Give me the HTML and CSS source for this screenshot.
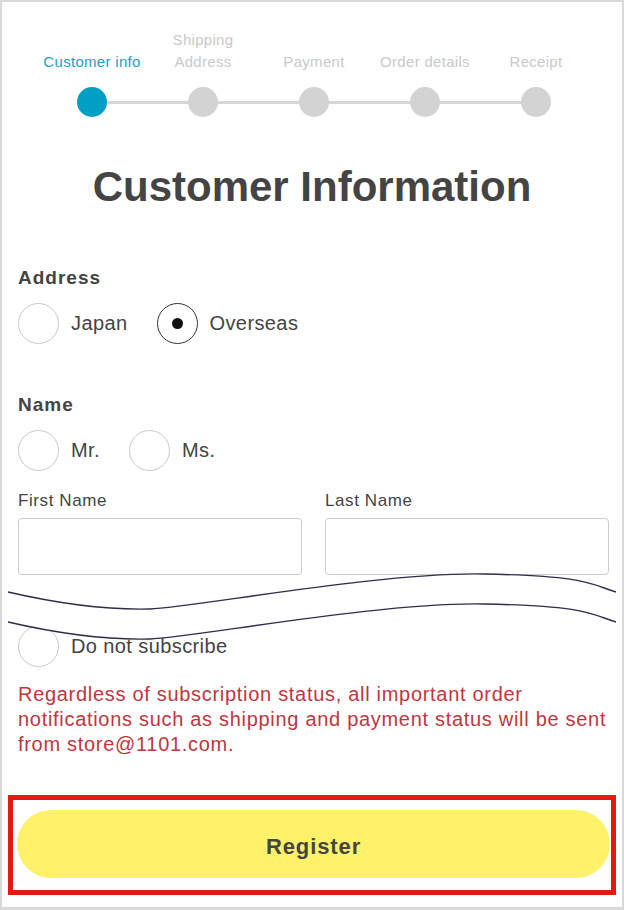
FILE: index.html
```html
<!DOCTYPE html>
<html lang="en">
<head>
<meta charset="utf-8">
<title>Customer Information</title>
<link rel="stylesheet" href="styles.css">
</head>
<body>
<div class="frame">
  <div class="stepper">
    <div class="step-labels">
      <span class="step-label active">Customer info</span>
      <span class="step-label">Shipping<br>Address</span>
      <span class="step-label">Payment</span>
      <span class="step-label">Order details</span>
      <span class="step-label">Receipt</span>
    </div>
    <div class="step-track">
      <span class="dot active"></span>
      <span class="dot"></span>
      <span class="dot"></span>
      <span class="dot"></span>
      <span class="dot"></span>
    </div>
  </div>

  <h1 class="title">Customer Information</h1>

  <div class="form">
    <div class="field-label">Address</div>
    <div class="radio-row">
      <label class="radio-item"><span class="radio"></span><span class="radio-text">Japan</span></label>
      <label class="radio-item"><span class="radio checked"></span><span class="radio-text">Overseas</span></label>
    </div>

    <div class="field-label name-label">Name</div>
    <div class="radio-row">
      <label class="radio-item"><span class="radio"></span><span class="radio-text">Mr.</span></label>
      <label class="radio-item"><span class="radio"></span><span class="radio-text">Ms.</span></label>
    </div>

    <div class="name-grid">
      <div class="name-field">
        <div class="small-label">First Name</div>
        <div class="text-input"></div>
      </div>
      <div class="name-field">
        <div class="small-label">Last Name</div>
        <div class="text-input"></div>
      </div>
    </div>

    <div class="radio-row subscribe-row">
      <label class="radio-item"><span class="radio"></span><span class="radio-text">Do not subscribe</span></label>
    </div>

    <p class="notice">Regardless of subscription status, all important order<br>notifications such as shipping and payment status will be sent<br>from store@1101.com.</p>
  </div>

  <div class="highlight">
    <button class="register" type="button">Register</button>
  </div>
</div>

<svg class="wave" width="624" height="100" viewBox="0 560 624 100" aria-hidden="true">
  <path d="M8,592 C60,604 110,610 150,609 S380,572 484,574 S590,584 616,592 L616,622 C590,614 588,606 484,604 C380,602 190,638 150,639 C110,640 60,634 8,622 Z" fill="#ffffff"/>
  <path d="M8,592 C60,604 110,610 150,609 S380,572 484,574 S590,584 616,592" fill="none" stroke="#2c2e4c" stroke-width="1.4"/>
  <path d="M8,622 C60,634 110,640 150,639 S380,602 484,604 S590,614 616,622" fill="none" stroke="#2c2e4c" stroke-width="1.4"/>
</svg>
</body>
</html>
```

FILE: styles.css
```css
* {
  box-sizing: border-box;
}

html, body {
  margin: 0;
  padding: 0;
  background: #ffffff;
}

body {
  position: relative;
  width: 624px;
  height: 910px;
  font-family: "Liberation Sans", Arial, Helvetica, sans-serif;
  color: #444444;
}

.frame {
  width: 624px;
  height: 910px;
  border: 2px solid #d9d9d9;
  border-bottom-width: 3px;
  overflow: hidden;
  padding-top: 27px;
}

/* Stepper */
.stepper {
  width: 555px;
  margin-left: 34.5px;
}

.step-labels {
  display: grid;
  grid-template-columns: repeat(5, 1fr);
  align-items: end;
  height: 44px;
}

.step-label {
  font-size: 15px;
  line-height: 22px;
  letter-spacing: 0.3px;
  text-align: center;
  color: #c9c9c9;
}

.step-label.active {
  color: #1aa2c5;
}

.step-track {
  position: relative;
  display: grid;
  grid-template-columns: repeat(5, 1fr);
  justify-items: center;
  margin-top: 14px;
}

.step-track::before {
  content: "";
  position: absolute;
  left: 55px;
  right: 55px;
  top: 14px;
  height: 3px;
  background: #d6d6d6;
}

.dot {
  position: relative;
  width: 30px;
  height: 30px;
  border-radius: 50%;
  background: #d3d3d3;
}

.dot.active {
  background: #009fc4;
}

/* Title */
.title {
  margin: 45px 0 0;
  font-size: 42px;
  line-height: 50px;
  font-weight: bold;
  text-align: center;
  color: #444444;
}

/* Form */
.form {
  padding: 0 13px 0 16px;
}

.field-label {
  margin-top: 54px;
  font-size: 19px;
  line-height: 24px;
  font-weight: bold;
  letter-spacing: 1px;
}

.field-label.name-label {
  margin-top: 49px;
}

.radio-row {
  display: flex;
  gap: 29px;
  margin-top: 13px;
}

.radio-item {
  display: flex;
  align-items: center;
  gap: 12px;
}

.radio {
  width: 41px;
  height: 41px;
  border-radius: 50%;
  border: 1px solid #c9c9c9;
  display: flex;
  align-items: center;
  justify-content: center;
  flex: none;
}

.radio.checked {
  border-color: #333333;
}

.radio.checked::after {
  content: "";
  width: 11px;
  height: 11px;
  border-radius: 50%;
  background: #111111;
}

.radio-text {
  font-size: 20px;
  letter-spacing: 0.4px;
  color: #444444;
}

.name-grid {
  display: grid;
  grid-template-columns: 1fr 1fr;
  gap: 23px;
  margin-top: 20px;
}

.small-label {
  font-size: 17px;
  line-height: 20px;
  letter-spacing: 0.6px;
}

.text-input {
  margin-top: 7px;
  height: 57px;
  border: 1px solid #cccccc;
  border-radius: 4px;
  background: #ffffff;
}

.subscribe-row {
  margin-top: 51px;
}

.notice {
  margin: 15px 0 0;
  font-size: 20px;
  line-height: 25px;
  letter-spacing: 0.7px;
  color: #c1363e;
  white-space: nowrap;
}

/* Register highlight */
.highlight {
  width: 608px;
  margin: 38px 0 0 6px;
  border: 5px solid #e41a12;
  padding: 10px 1px 12px 4px;
}

.register {
  display: block;
  width: 100%;
  height: 68px;
  padding: 5px 0 0;
  border: none;
  border-radius: 34px;
  background: #fff26a;
  font-family: "Liberation Sans", Arial, Helvetica, sans-serif;
  font-size: 22px;
  font-weight: bold;
  letter-spacing: 0.9px;
  color: #444444;
  cursor: pointer;
}

/* Break (wave) overlay */
.wave {
  position: absolute;
  left: 0;
  top: 560px;
}
```
